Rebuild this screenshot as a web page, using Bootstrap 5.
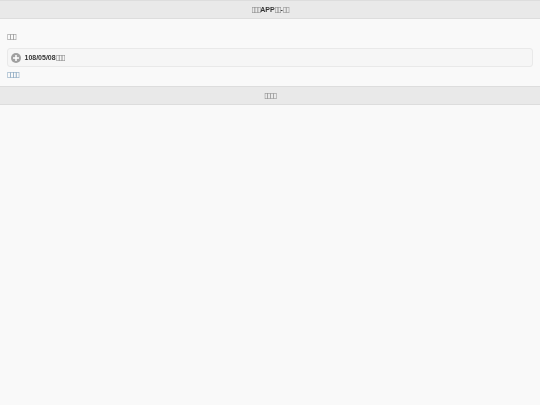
<!DOCTYPE html>
<html lang="zh-Hant">
<head>
<meta charset="utf-8">
<link href="https://cdn.jsdelivr.net/npm/bootstrap@5.3.0/dist/css/bootstrap.min.css" rel="stylesheet">
<style>
html,body{height:100%}
body{background:#f9f9f9;color:#333;font-family:"Liberation Sans",Arial,sans-serif;font-size:7px;line-height:8px}
.bar-x{background:#e9e9e9;border-top:1px solid #ddd;border-bottom:1px solid #ddd;font-weight:700;text-align:center}
.bar-top{height:19px;padding-top:5px}
.bar-foot{height:19px;padding-top:5px;margin-top:8px}
.txt-x{display:inline-block;filter:blur(.3px);white-space:nowrap}
.tofu{font-family:"DejaVu Sans",sans-serif;font-weight:400;font-size:8px;line-height:8px;color:#888;letter-spacing:-1.5px}
.body-x{padding:14px 7px 0}
.label-x{height:15px}
.panel-x{height:19px;background:#f6f6f6;border:1px solid #e9e9e9;border-radius:3px;padding:0 3px;font-weight:700}
.ic-x{width:10px;height:10px;flex:none;margin-right:-.5px}
.more-x{display:block;margin-top:4px;height:7px;color:#6aa9dc;text-decoration:underline}
.more-x .tofu{color:#7a9cb8}
</style>
</head>
<body>
<div class="bar-x bar-top"><span class="txt-x"><span class="tofu">▯▯▯</span>APP<span class="tofu">▯▯</span>-<span class="tofu">▯▯</span></span></div>
<div class="body-x">
<div class="label-x"><span class="txt-x"><span class="tofu">▯▯▯</span></span></div>
<div class="panel-x d-flex align-items-center gap-1">
<svg class="ic-x" viewBox="0 0 20 20"><circle cx="10" cy="10" r="10" fill="#a0a0a0"/><path d="M8.500 4h3v4.500h4.500v3h-4.500v4.500h-3v-4.500h-4.500v-3h4.500z" fill="#fff"/></svg>
<span class="txt-x">108/05/08<span class="tofu">▯▯▯</span></span>
</div>
<a class="more-x" href="#"><span class="txt-x"><span class="tofu">▯▯▯▯</span></span></a>
</div>
<div class="bar-x bar-foot"><span class="txt-x"><span class="tofu">▯▯▯▯</span></span></div>
<script src="https://cdn.jsdelivr.net/npm/bootstrap@5.3.0/dist/js/bootstrap.bundle.min.js"></script>
</body>
</html>
